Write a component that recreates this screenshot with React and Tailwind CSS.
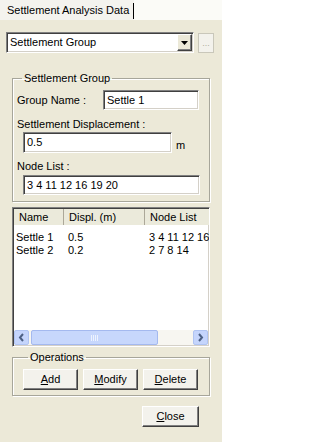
import React from 'react';

const sunk =
  'border border-t-[#808080] border-l-[#808080] border-b-white border-r-white shadow-[inset_1px_1px_0_#404040,inset_-1px_-1px_0_#d4d0c8] bg-white';
const raised =
  'border border-t-white border-l-white border-b-[#404040] border-r-[#404040] shadow-[inset_-1px_-1px_0_#808080]';
const etched = 'border border-[#a7a69a] shadow-[1px_1px_0_#fff,inset_1px_1px_0_#fff]';

function Chevron({ dir }) {
  return (
    <svg width="7" height="9" viewBox="0 0 7 9">
      <path
        d={dir === 'left' ? 'M5 1 L2 4.5 L5 8' : 'M2 1 L5 4.5 L2 8'}
        fill="none"
        stroke="#4d6185"
        strokeWidth="2"
      />
    </svg>
  );
}

export default function App() {
  const rows = [
    ['Settle 1', '0.5', '3 4 11 12 16 19 20'],
    ['Settle 2', '0.2', '2 7 8 14'],
  ];

  return (
    <div className="w-[222px] h-[442px] bg-[#ece9d8] text-black text-[11px] leading-[13px] font-['Liberation_Sans',Arial,sans-serif] overflow-hidden flex flex-col">
      {/* tab strip */}
      <div className="flex h-[20px]">
        <div className="w-[134px] bg-[#f4f3ee] flex">
          <span className="flex-1 pl-[7px] pt-[4px] whitespace-nowrap">Settlement Analysis Data</span>
          <div className="w-px h-[16px] mt-[3px] bg-black" />
        </div>
        <div className="flex-1 bg-[#fbfbf7]" />
      </div>

      {/* type selector */}
      <div className="flex items-center mt-[12px] pl-[6px] gap-[4px]">
        <div className={`${sunk} w-[188px] h-[21px] flex items-center`}>
          <span className="flex-1 pl-[3px]">Settlement Group</span>
          <div className={`${raised} bg-[#ece9d8] w-[15px] h-[17px] mr-[1px] flex items-center justify-center`}>
            <svg width="7" height="4" viewBox="0 0 7 4">
              <path d="M0 0 H7 L3.5 4 Z" fill="#000" />
            </svg>
          </div>
        </div>
        <button className="w-[16px] h-[20px] bg-[#f3f2ec] border border-[#c9c7ba] text-[#b0ad9f] flex items-end justify-center pb-[4px] text-[9px] leading-[9px]">
          ...
        </button>
      </div>

      {/* settlement group */}
      <fieldset className={`${etched} ml-[12px] w-[198px] mt-[19px] pl-[4px] pb-[6px]`}>
        <legend className="ml-[5px] px-[2px]">Settlement Group</legend>
        <div className="flex items-center mt-[5px]">
          <span className="w-[86px]">Group Name :</span>
          <div className={`${sunk} w-[96px] h-[20px] flex items-center pl-[3px]`}>Settle 1</div>
        </div>
        <div className="mt-[8px]">Settlement Displacement :</div>
        <div className="flex items-center mt-[1px] pl-[6px]">
          <div className={`${sunk} w-[149px] h-[21px] flex items-center pl-[3px]`}>0.5</div>
          <span className="ml-[4px] mt-[5px]">m</span>
        </div>
        <div className="mt-[7px]">Node List :</div>
        <div className="pl-[6px] mt-[2px]">
          <div className={`${sunk} w-[177px] h-[20px] flex items-center pl-[3px]`}>3 4 11 12 16 19 20</div>
        </div>
      </fieldset>

      {/* list view */}
      <div className={`${sunk} ml-[12px] mt-[5px] w-[198px] h-[140px] flex flex-col overflow-hidden`}>
        <div className="flex h-[16px] mt-[1px] ml-[1px] bg-[#ebeadb] shrink-0">
          <div className="w-[50px] pl-[5px] border-r border-[#aca899] flex items-center">Name</div>
          <div className="w-[81px] pl-[5px] border-r border-[#aca899] flex items-center">Displ. (m)</div>
          <div className="flex-1 pl-[5px] flex items-center whitespace-nowrap">Node List</div>
        </div>
        <div className="flex-1 pt-[6px]">
          {rows.map((r) => (
            <div key={r[0]} className="flex h-[13px] whitespace-nowrap">
              <span className="w-[52px] pl-[3px]">{r[0]}</span>
              <span className="w-[81px] pl-[3px]">{r[1]}</span>
              <span className="flex-1 pl-[3px] overflow-hidden">{r[2]}</span>
            </div>
          ))}
        </div>
        {/* horizontal scrollbar */}
        <div className="flex h-[15px] mx-[1px] mb-[1px] bg-[#f7f6f1] items-stretch shrink-0">
          <div className="w-[15px] bg-[#c5d5fc] border border-[#b0c4f2] rounded-[2px] flex items-center justify-center">
            <Chevron dir="left" />
          </div>
          <div className="w-[127px] ml-[2px] bg-[#c7d7fc] border border-[#a4b9ef] rounded-[2px] flex items-center justify-center">
            <svg width="8" height="6" viewBox="0 0 8 6">
              <path d="M0.5 0 V6 M2.5 0 V6 M4.5 0 V6 M6.5 0 V6" stroke="#eef3fe" strokeWidth="1" />
            </svg>
          </div>
          <div className="flex-1" />
          <div className="w-[15px] bg-[#c5d5fc] border border-[#b0c4f2] rounded-[2px] flex items-center justify-center">
            <Chevron dir="right" />
          </div>
        </div>
      </div>

      {/* operations */}
      <fieldset className={`${etched} ml-[12px] w-[198px] mt-[4px] pl-[10px] pb-[5px]`}>
        <legend className="ml-[5px] px-[2px]">Operations</legend>
        <div className="flex gap-[5px] mt-[5px]">
          <button className={`${raised} w-[55px] h-[21px] bg-[#f3f2ec]`}>
            <span className="underline underline-offset-[1px]">A</span>dd
          </button>
          <button className={`${raised} w-[55px] h-[21px] bg-[#f3f2ec]`}>
            <span className="underline underline-offset-[1px]">M</span>odify
          </button>
          <button className={`${raised} w-[55px] h-[21px] bg-[#f3f2ec]`}>
            <span className="underline underline-offset-[1px]">D</span>elete
          </button>
        </div>
      </fieldset>

      <div className="flex mt-[10px] pl-[142px]">
        <button className={`${raised} w-[57px] h-[21px] bg-[#f3f2ec]`}>
          <span className="underline underline-offset-[1px]">C</span>lose
        </button>
      </div>
    </div>
  );
}
